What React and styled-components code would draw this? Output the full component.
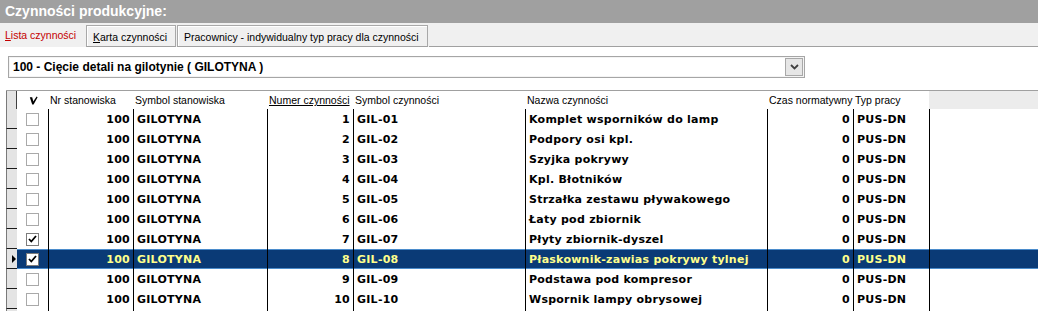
import React from 'react';
import styled, { createGlobalStyle } from 'styled-components';

const GlobalStyle = createGlobalStyle`
  html, body {
    margin: 0;
    padding: 0;
    background: #ffffff;
    overflow: hidden;
  }
  * { box-sizing: border-box; }
`;

const COLS = '11px 31px 85px 134px 86px 172px 242px 86px 76px 1fr';

const Window = styled.div`
  width: 1038px;
  height: 311px;
  overflow: hidden;
  background: #fff;
  font-family: "Liberation Sans", Arial, sans-serif;
`;

const TitleBar = styled.div`
  height: 23px;
  background: #a0a0a0;
  color: #fff;
  font-size: 14px;
  font-weight: bold;
  line-height: 23px;
  padding-left: 5px;
`;

const TabBar = styled.div`
  display: flex;
  align-items: flex-end;
  height: 24px;
  background: #f0f0f0;
`;

const Tab = styled.div`
  height: ${p => (p.$active ? '24px' : '22px')};
  padding: 0 ${p => (p.$active ? '6px 0 5px' : '6px')};
  width: ${p => p.$w}px;
  display: flex;
  align-items: center;
  font-size: 10.5px;
  color: ${p => (p.$active ? '#c40000' : '#000')};
  border: ${p => (p.$active ? 'none' : '1px solid #a8a8a8')};
  border-bottom: ${p => (p.$active ? 'none' : '1px solid #a0a0a0')};
  box-shadow: ${p => (p.$active ? 'none' : 'inset 1px 1px 0 #fff')};
  margin-right: 1px;
  white-space: nowrap;
  padding-top: ${p => (p.$active ? '0' : '2px')};

  u { text-decoration: underline; }
`;

const TabFill = styled.div`
  flex: 1;
  height: 100%;
  border-bottom: 1px solid #a0a0a0;
`;

const Content = styled.div`
  padding: 9px 0 0 0;
`;

const Combo = styled.div`
  margin-left: 8px;
  width: 797px;
  height: 22px;
  border: 1px solid #a6a6a6;
  box-shadow: inset 0 0 0 1px #f4f4f4;
  display: flex;
  align-items: center;
  justify-content: space-between;
  padding: 0 1px 0 4px;
`;

const ComboText = styled.span`
  font-size: 12px;
  font-weight: bold;
  color: #000;
`;

const ComboButton = styled.div`
  width: 18px;
  height: 18px;
  border: 1px solid #a8a8a8;
  background: #e6e6e6;
  display: flex;
  align-items: center;
  justify-content: center;
`;

const Grid = styled.div`
  margin: 12px 0 0 6px;
  border-top: 1px solid #a0a0a0;
`;

const Row = styled.div`
  display: grid;
  grid-template-columns: ${COLS};
  height: ${p => (p.$header ? '18px' : '20px')};
`;

const Indicator = styled.div`
  background: #e4e4e4;
  border-left: 1px solid #7a7a7a;
  border-right: ${p => (p.$header ? '1px solid #404040' : 'none')};
  border-bottom: ${p => (p.$header ? 'none' : '1px solid #1a1a1a')};
  display: flex;
  align-items: center;
  justify-content: flex-end;
  padding-right: 1px;
`;

const HeadCell = styled.div`
  font-size: 10.5px;
  color: #000;
  padding-left: 2px;
  display: flex;
  align-items: center;
  white-space: nowrap;
  background: ${p => (p.$blank ? '#ececec' : '#fff')};
  justify-content: ${p => (p.$center ? 'center' : 'flex-start')};
  text-decoration: ${p => (p.$sorted ? 'underline' : 'none')};
`;

const Cell = styled.div`
  font-family: "DejaVu Sans", Verdana, sans-serif;
  font-size: 11px;
  font-weight: bold;
  letter-spacing: 0.25px;
  white-space: nowrap;
  overflow: hidden;
  display: flex;
  align-items: center;
  padding: 0 3px 0 3px;
  justify-content: ${p => (p.$right ? 'flex-end' : p.$center ? 'center' : 'flex-start')};
  border-left: ${p => (p.$line ? '1px solid #000' : 'none')};
  background: ${p => (p.$sel ? '#0a3a76' : '#fff')};
  color: ${p => (p.$sel ? '#ffff8c' : '#000')};
  box-shadow: ${p => (p.$sel ? 'inset 0 1px 0 #4b8ccc, inset 0 -1px 0 #4b8ccc' : 'none')};
`;

const Box = styled.div`
  width: 13px;
  height: 13px;
  background: #fff;
  border: 1px solid ${p => (p.$checked ? '#7c7c7c' : '#a9a9a9')};
  display: flex;
  align-items: center;
  justify-content: center;
`;

const Arrow = styled.div`
  width: 0;
  height: 0;
  border-top: 4px solid transparent;
  border-bottom: 4px solid transparent;
  border-left: 4px solid #000;
`;

const Check = () => (
  <svg width="9" height="8" viewBox="0 0 9 8">
    <path d="M1 4 L3.3 6.5 L8 1" fill="none" stroke="#000" strokeWidth="1.8" />
  </svg>
);

const HeadMark = () => (
  <svg width="9" height="9" viewBox="0 0 9 9">
    <path d="M0.8 1.2 L3.2 1.2 L4.3 5.6 L7.6 0.6 L8.6 1.2 L4.6 8.4 L3.2 8.4 Z" fill="#000" />
  </svg>
);

const Chevron = () => (
  <svg width="9" height="6" viewBox="0 0 9 6">
    <path d="M1 1 L4.5 4.5 L8 1" fill="none" stroke="#404040" strokeWidth="1.8" />
  </svg>
);

const rows = [
  { n: 1, name: 'Komplet wsporników do lamp' },
  { n: 2, name: 'Podpory osi kpl.' },
  { n: 3, name: 'Szyjka pokrywy' },
  { n: 4, name: 'Kpl. Błotników' },
  { n: 5, name: 'Strzałka zestawu pływakowego' },
  { n: 6, name: 'Łaty pod zbiornik' },
  { n: 7, name: 'Płyty zbiornik-dyszel', checked: true },
  { n: 8, name: 'Płaskownik-zawias pokrywy tylnej', checked: true, selected: true },
  { n: 9, name: 'Podstawa pod kompresor' },
  { n: 10, name: 'Wspornik lampy obrysowej' },
];

const headers = [
  'Nr stanowiska',
  'Symbol stanowiska',
  'Numer czynności',
  'Symbol czynności',
  'Nazwa czynności',
  'Czas normatywny',
  'Typ pracy',
];

export default function App() {
  return (
    <Window>
      <GlobalStyle />
      <TitleBar>Czynności produkcyjne:</TitleBar>
      <TabBar>
        <Tab $active $w={85}><span><u>L</u>ista czynności</span></Tab>
        <Tab $w={90}><span><u>K</u>arta czynności</span></Tab>
        <Tab $w={251}>Pracownicy - indywidualny typ pracy dla czynności</Tab>
        <TabFill />
      </TabBar>
      <Content>
        <Combo>
          <ComboText>100 - Cięcie detali na gilotynie ( GILOTYNA )</ComboText>
          <ComboButton><Chevron /></ComboButton>
        </Combo>
        <Grid>
          <Row $header>
            <Indicator $header />
            <HeadCell $center><HeadMark /></HeadCell>
            {headers.map(h => (
              <HeadCell key={h} $sorted={h === 'Numer czynności'}>{h}</HeadCell>
            ))}
            <HeadCell $blank />
          </Row>
          {rows.map(r => {
            const s = r.selected;
            const code = `GIL-${String(r.n).padStart(2, '0')}`;
            return (
              <Row key={r.n}>
                <Indicator>{s && <Arrow />}</Indicator>
                <Cell $sel={s} $center>
                  <Box $checked={r.checked}>{r.checked && <Check />}</Box>
                </Cell>
                <Cell $sel={s} $line $right>100</Cell>
                <Cell $sel={s} $line>GILOTYNA</Cell>
                <Cell $sel={s} $line $right>{r.n}</Cell>
                <Cell $sel={s} $line>{code}</Cell>
                <Cell $sel={s} $line>{r.name}</Cell>
                <Cell $sel={s} $line $right>0</Cell>
                <Cell $sel={s} $line>PUS-DN</Cell>
                <Cell $sel={s} $line />
              </Row>
            );
          })}
          <Row>
            <Indicator />
            <Cell />
            <Cell $line />
            <Cell $line />
            <Cell $line />
            <Cell $line />
            <Cell $line />
            <Cell $line />
            <Cell $line />
            <Cell $line />
          </Row>
        </Grid>
      </Content>
    </Window>
  );
}
